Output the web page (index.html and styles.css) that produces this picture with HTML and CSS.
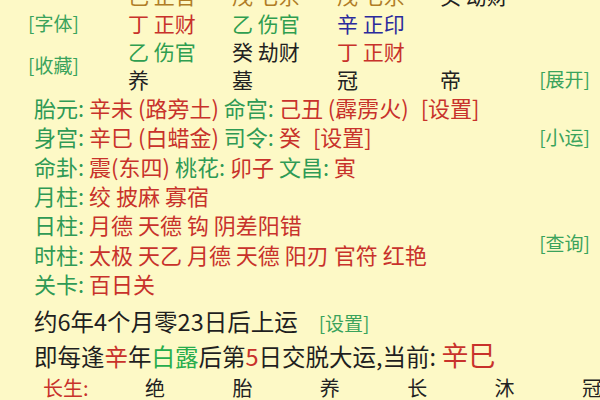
FILE: index.html
```html
<!DOCTYPE html>
<html lang="zh">
<head>
<meta charset="utf-8">
<link rel="stylesheet" href="styles.css">
</head>
<body>
<div class="page">
  <div class="pillars">
    <div class="lbl r0"></div>
    <div class="cell brown">己 正官</div>
    <div class="cell brown">戊 七杀</div>
    <div class="cell brown">戊 七杀</div>
    <div class="cell black">癸 劫财</div>
    <div class="side"></div>

    <div class="lbl link">[字体]</div>
    <div class="cell red">丁 正财</div>
    <div class="cell green">乙 伤官</div>
    <div class="cell blue">辛 正印</div>
    <div class="cell"></div>
    <div class="side"></div>

    <div class="lbl link span2">[收藏]</div>
    <div class="cell green">乙 伤官</div>
    <div class="cell black">癸 劫财</div>
    <div class="cell red">丁 正财</div>
    <div class="cell"></div>
    <div class="side"></div>

    <div class="cell black">养</div>
    <div class="cell black">墓</div>
    <div class="cell black">冠</div>
    <div class="cell black">帝</div>
    <div class="side link">[展开]</div>
  </div>

  <div class="info">
    <div class="line"><span class="g">胎元:</span> <span class="r">辛未 (路旁土)</span> <span class="g">命宫:</span> <span class="r">己丑 (霹雳火)</span><span class="r set">[设置]</span></div>
    <div class="aside"></div>
    <div class="line"><span class="g">身宫:</span> <span class="r">辛巳 (白蜡金)</span> <span class="g">司令:</span> <span class="r">癸</span><span class="r set">[设置]</span></div>
    <div class="aside link">[小运]</div>
    <div class="line"><span class="g">命卦:</span> <span class="r">震(东四)</span> <span class="g">桃花:</span> <span class="r">卯子</span> <span class="g">文昌:</span> <span class="r">寅</span></div>
    <div class="aside"></div>
    <div class="line"><span class="g">月柱:</span> <span class="r">绞 披麻 寡宿</span></div>
    <div class="aside"></div>
    <div class="line"><span class="g">日柱:</span> <span class="r">月德 天德 钩 阴差阳错</span></div>
    <div class="aside link query">[查询]</div>
    <div class="line"><span class="g">时柱:</span> <span class="r">太极 天乙 月德 天德 阳刃 官符 红艳</span></div>
    <div class="line"><span class="g">关卡:</span> <span class="r">百日关</span></div>
    <div class="aside"></div>
  </div>

  <div class="yun">
    <div class="yline">约6年4个月零23日后上运<span class="link set2">[设置]</span></div>
    <div class="yline">即每逢<span class="r">辛</span>年<span class="bg">白露</span>后第<span class="r">5</span>日交脱大运,当前: <span class="r big">辛巳</span></div>
  </div>

  <div class="cs">
    <div class="cslbl">长生:</div>
    <div class="csc">绝</div>
    <div class="csc">胎</div>
    <div class="csc">养</div>
    <div class="csc">长</div>
    <div class="csc">沐</div>
    <div class="csc">冠</div>
  </div>
</div>
</body>
</html>
```

FILE: styles.css
```css
html, body {
  margin: 0;
  padding: 0;
  background: #fdf9c6;
  overflow: hidden;
}
body {
  width: 600px;
  height: 400px;
  font-family: "Noto Sans CJK SC", "Noto Sans", sans-serif;
  color: #1f1f1f;
}
.page {
  margin-top: -19px;
  width: 600px;
  overflow: hidden;
}
.pillars {
  display: grid;
  grid-template-columns: 100px 104px 105px 103px 98px 1fr;
  grid-auto-rows: 28px;
  padding-left: 28px;
  padding-right: 10px;
  font-size: 21px;
  line-height: 28px;
  align-items: center;
}
.pillars .span2 {
  grid-row: span 2;
  align-self: center;
}
.cell { white-space: nowrap; }
.lbl { font-size: 18.5px; }
.side { justify-self: end; }
.link { color: #3aa35c; font-size: 19px; }
.brown { color: #b07d26; }
.black { color: #222; }
.red { color: #c8322b; }
.green { color: #2f9e50; }
.blue { color: #2a2a9c; }

.info {
  display: grid;
  grid-template-columns: 1fr auto;
  grid-auto-rows: 29.3px;
  align-items: center;
  padding-left: 34px;
  padding-right: 10px;
  font-size: 22px;
  line-height: 29px;
}
.line { white-space: nowrap; }
.aside { justify-self: end; }
.query {
  grid-row: span 2;
  align-self: center;
  padding-top: 6px;
}
.g { color: #2f9a55; }
.r { color: #c8322b; }
.set { margin-left: 12px; }
.set2 { margin-left: 21px; font-size: 19px; }
.bg { color: #27ad4d; }
.big { font-size: 27px; }

.yun {
  margin-top: 6px;
  padding-left: 34px;
  font-size: 23.5px;
}
.yline {
  height: 34px;
  line-height: 34px;
  white-space: nowrap;
}
.cs {
  display: grid;
  grid-template-columns: 102px repeat(5, 87.4px) 20px;
  padding-left: 43px;
  font-size: 20px;
  height: 32px;
  line-height: 32px;
  white-space: nowrap;
}
.cslbl { color: #c8322b; }
.csc { color: #222; }
```
